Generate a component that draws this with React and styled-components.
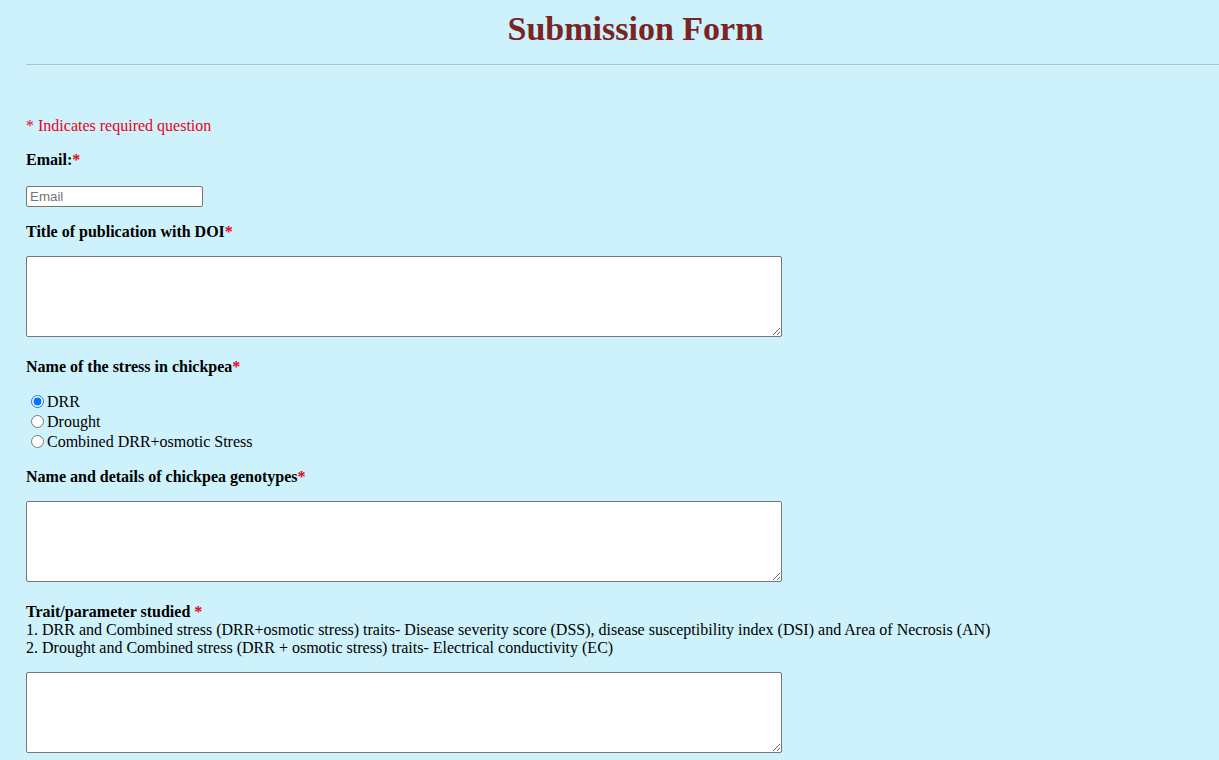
import React from "react";
import styled, { createGlobalStyle } from "styled-components";

const Global = createGlobalStyle`
  html, body { margin: 0; padding: 0; }
  body {
    background: #cdf2fb;
    font-family: "Liberation Serif", "Times New Roman", serif;
    font-size: 16px;
    color: #000;
    overflow-x: hidden;
  }
`;

const Page = styled.div`
  padding: 0 0 40px 26px;
`;

const Title = styled.h1`
  margin: 10px 0 0;
  padding-left: 26px;
  text-align: center;
  font-family: "Liberation Serif", "Times New Roman", serif;
  font-weight: bold;
  font-size: 34px;
  line-height: 38px;
  color: #7a2424;
`;

const Rule = styled.hr`
  margin: 16px 0 0;
  border: 0;
  border-top: 1px solid #a6c6cf;
  height: 0;
`;

const Note = styled.div`
  margin-top: 52px;
  line-height: 18px;
  color: #e8001c;
`;

const Label = styled.div`
  margin-top: ${(p) => p.$top}px;
  padding-top: 1px;
  height: 17px;
  line-height: 18px;
  font-weight: bold;
`;

const Star = styled.span`
  color: #e8001c;
`;

const Hint = styled.div`
  padding-top: 1px;
  height: 17px;
  line-height: 18px;
`;

const EmailInput = styled.input`
  display: block;
  box-sizing: border-box;
  margin: ${(p) => p.$top}px 0 0;
  width: 177px;
  height: 21px;
  padding: 0 3px;
  border: 1px solid #767676;
  border-radius: 2px;
  background: #fff;
  font-family: "Liberation Sans", Arial, sans-serif;
  font-size: 13.33px;
  &::placeholder { color: #757575; }
`;

const Area = styled.textarea`
  display: block;
  box-sizing: border-box;
  margin: 16px 0 0;
  width: 756px;
  height: 81px;
  border: 1px solid #767676;
  border-radius: 2px;
  background: #fff;
  font-family: "Liberation Mono", monospace;
  font-size: 13.33px;
`;

const Options = styled.div`
  margin-top: 16px;
`;

const Option = styled.label`
  display: flex;
  align-items: center;
  height: 20px;
  line-height: 20px;
  padding-top: 1px;
  box-sizing: border-box;
`;

const Radio = styled.input`
  margin: 0 3px 0 5px;
  width: 13px;
  height: 13px;
`;

export default function App() {
  return (
    <>
      <Global />
      <Page>
        <Title>Submission Form</Title>
        <Rule />
        <Note>* Indicates required question</Note>

        <Label $top={15}>Email:<Star>*</Star></Label>
        <EmailInput $top={18} type="email" placeholder="Email" />

        <Label $top={15}>Title of publication with DOI<Star>*</Star></Label>
        <Area />

        <Label $top={20}>Name of the stress in chickpea<Star>*</Star></Label>
        <Options>
          <Option><Radio type="radio" name="stress" defaultChecked />DRR</Option>
          <Option><Radio type="radio" name="stress" />Drought</Option>
          <Option><Radio type="radio" name="stress" />Combined DRR+osmotic Stress</Option>
        </Options>

        <Label $top={16}>Name and details of chickpea genotypes<Star>*</Star></Label>
        <Area />

        <Label $top={20}>Trait/parameter studied <Star>*</Star></Label>
        <Hint>1. DRR and Combined stress (DRR+osmotic stress) traits- Disease severity score (DSS), disease susceptibility index (DSI) and Area of Necrosis (AN)</Hint>
        <Hint>2. Drought and Combined stress (DRR + osmotic stress) traits- Electrical conductivity (EC)</Hint>
        <Area />
      </Page>
    </>
  );
}
